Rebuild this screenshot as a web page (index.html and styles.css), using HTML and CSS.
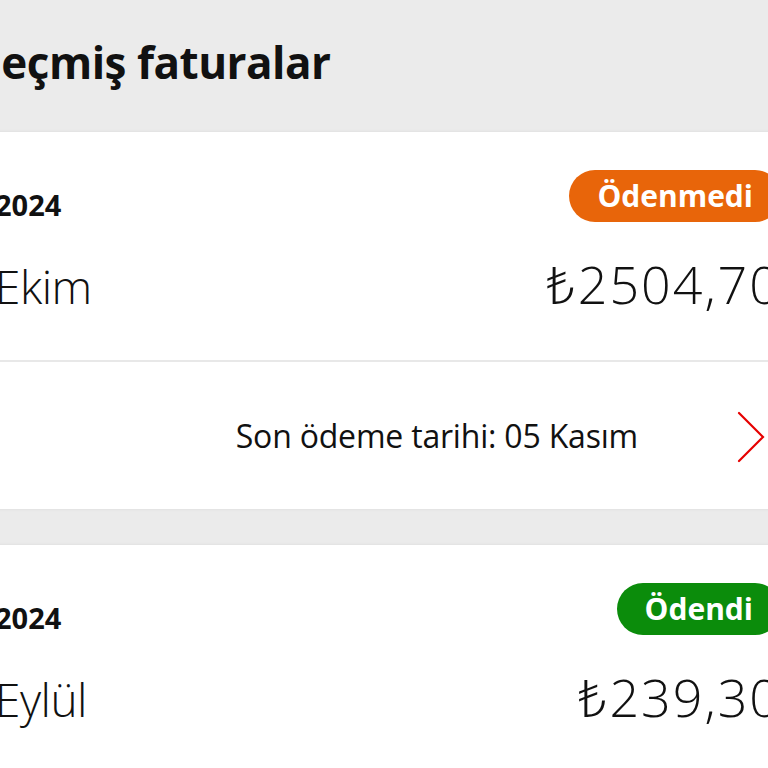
FILE: index.html
```html
<!DOCTYPE html>
<html lang="tr">
<head>
<meta charset="utf-8">
<title>Geçmiş faturalar</title>
<link rel="stylesheet" href="styles.css">
</head>
<body>
<div class="screen">
  <h1 class="title">Geçmiş faturalar</h1>

  <section class="card">
    <div class="card-top">
      <div class="row head">
        <span class="year">2024</span>
        <span class="badge unpaid">Ödenmedi</span>
      </div>
      <div class="row main">
        <span class="month">Ekim</span>
        <span class="amount">₺2504,70</span>
      </div>
    </div>
    <div class="card-bottom">
      <span class="due">Son ödeme tarihi: 05 Kasım</span>
      <svg class="chev" width="40" height="52" viewBox="0 0 40 52" aria-hidden="true">
        <polyline points="4,2 28,26 4,50" fill="none" stroke="#e60000" stroke-width="2.2" stroke-linecap="round" stroke-linejoin="miter"/>
      </svg>
    </div>
  </section>

  <section class="card">
    <div class="card-top">
      <div class="row head">
        <span class="year">2024</span>
        <span class="badge paid">Ödendi</span>
      </div>
      <div class="row main">
        <span class="month">Eylül</span>
        <span class="amount">₺239,30</span>
      </div>
    </div>
  </section>
</div>
</body>
</html>
```

FILE: styles.css
```css
html, body {
  margin: 0;
  padding: 0;
  background: #ebebeb;
  overflow: hidden;
  height: 768px;
}

.screen {
  width: 830px;
  margin-left: -36px;
  font-family: "Open Sans", "Noto Sans", sans-serif;
  color: #111;
}

.title {
  margin: 0;
  height: 132px;
  box-sizing: border-box;
  padding: 32px 0 0 6px;
  font-size: 44px;
  font-weight: 700;
  line-height: 60px;
  letter-spacing: -0.5px;
}

.card {
  background: #fff;
  box-shadow: 0 0 3px rgba(0, 0, 0, 0.08);
  margin-bottom: 36px;
}

.card-top {
  padding: 38px 49px 0 31px;
  height: 228px;
  box-sizing: border-box;
}

.row {
  display: flex;
  justify-content: space-between;
}

.head {
  align-items: center;
  height: 52px;
}

.year {
  font-size: 29px;
  font-weight: 700;
  padding-top: 16px;
}

.badge {
  height: 52px;
  line-height: 52px;
  border-radius: 26px;
  padding: 0 28px;
  color: #fff;
  font-size: 30px;
  font-weight: 700;
  margin-right: -36px;
}

.unpaid { background: #e8650a; }
.paid { background: #0b8c0b; }

.main {
  align-items: baseline;
  margin-top: 27px;
}

.month {
  font-size: 46px;
  font-weight: 300;
  line-height: 70px;
  letter-spacing: -0.5px;
}

.amount {
  font-size: 52px;
  font-weight: 300;
  line-height: 70px;
  letter-spacing: 2px;
  margin-right: -36px;
}

.card-bottom {
  border-top: 2px solid #e8e8e8;
  height: 147px;
  display: flex;
  align-items: center;
  justify-content: flex-end;
  padding-right: 19px;
}

.due {
  font-size: 32px;
  font-weight: 400;
  letter-spacing: -0.2px;
  margin-right: 97px;
}

.chev {
  display: block;
  margin-top: 2px;
}
```
